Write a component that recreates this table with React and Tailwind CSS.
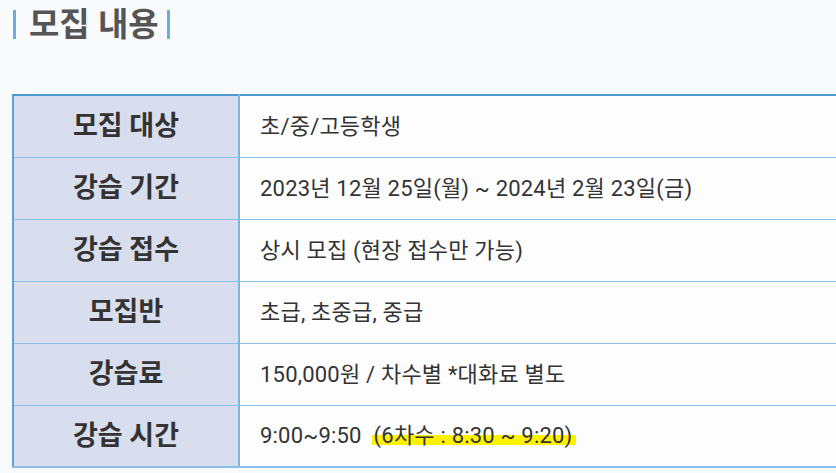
const rows = [
    { label: "모집 대상", value: "초/중/고등학생" },
    { label: "강습 기간", value: "2023년 12월 25일(월) ~ 2024년 2월 23일(금)" },
    { label: "강습 접수", value: "상시 모집 (현장 접수만 가능)" },
    { label: "모집반", value: "초급, 초중급, 중급" },
    { label: "강습료", value: "150,000원 / 차수별 *대화료 별도" },
];

const App = () => {
    return (
        <div
            className="w-[836px] h-[473px] overflow-hidden bg-[#f9fafc] text-[#333]"
            style={{ fontFamily: 'Roboto, "Noto Sans CJK KR", "Noto Sans", sans-serif' }}
        >
            <div className="flex items-center h-[48px] pl-[13px]">
                <span className="w-[3px] h-[29px] bg-[#6aaee0]" />
                <h2 className="ml-[13px] mr-[8px] text-[33px] font-bold text-[#555] leading-none">
                    모집 내용
                </h2>
                <span className="w-[3px] h-[29px] bg-[#6aaee0]" />
            </div>

            <div className="pl-[12px] pt-[46px]">
                <table className="w-[900px] border-collapse border-t-2 border-t-[#4a9ad0] border-l-2 border-l-[#5ba3d6]">
                    <tbody>
                        {rows.map((row) => (
                            <tr key={row.label} className="h-[62px]">
                                <th className="w-[226px] bg-[#d8deee] border-r-2 border-r-[#7fb6e0] border-b border-b-[#8cbfe6] text-[27px] font-bold text-[#333]">
                                    {row.label}
                                </th>
                                <td className="bg-[#fdfdfe] pl-[20px] border-b border-b-[#8cbfe6] text-[22px] tracking-[0.2px] text-[#333]">
                                    {row.value}
                                </td>
                            </tr>
                        ))}
                        <tr className="h-[62px]">
                            <th className="w-[226px] bg-[#d8deee] border-r-2 border-r-[#7fb6e0] border-b-2 border-b-[#8cbfe6] text-[27px] font-bold text-[#333]">
                                강습 시간
                            </th>
                            <td className="bg-[#fdfdfe] pl-[20px] border-b-2 border-b-[#8cbfe6] text-[22px] tracking-[0.2px] text-[#333]">
                                9:00~9:50
                                <span className="ml-[10px] bg-[linear-gradient(transparent_50%,#fff200_50%,#fff200_88%,transparent_88%)] pl-[2px] pr-[4px]">
                                    (6차수 : 8:30 ~ 9:20)
                                </span>
                            </td>
                        </tr>
                    </tbody>
                </table>
            </div>
        </div>
    );
};

export default App;
